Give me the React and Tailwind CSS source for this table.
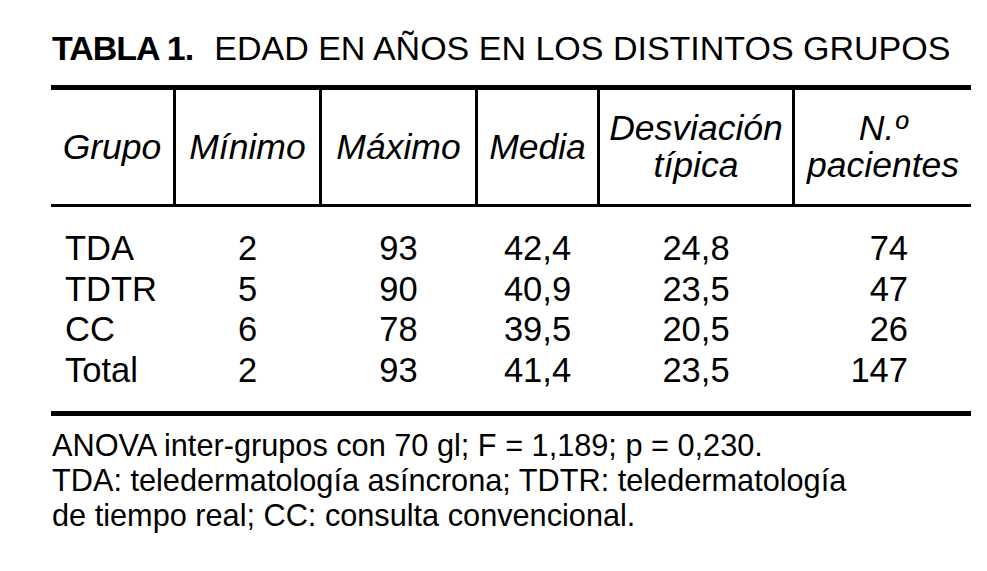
export default function App() {
  const rows = [
    { grupo: 'TDA', min: '2', max: '93', media: '42,4', desv: '24,8', n: '74' },
    { grupo: 'TDTR', min: '5', max: '90', media: '40,9', desv: '23,5', n: '47' },
    { grupo: 'CC', min: '6', max: '78', media: '39,5', desv: '20,5', n: '26' },
    { grupo: 'Total', min: '2', max: '93', media: '41,4', desv: '23,5', n: '147' },
  ]

  const cols = 'grid grid-cols-[125px_146px_156px_122px_195px_176px]'
  const head = 'flex h-[114px] items-center justify-center border-r-[3px] border-black text-center italic'

  return (
    <div className="h-[571px] w-[987px] bg-white pl-[51px] pt-[31px] font-['Liberation_Sans',Arial,sans-serif] text-black">
      {/* Titulo */}
      <h1 className="whitespace-nowrap pl-[1px] text-[34px] leading-none">
        <span className="font-bold tracking-[-1px]">TABLA 1.</span>
        <span className="ml-[21px]">EDAD EN AÑOS EN LOS DISTINTOS GRUPOS</span>
      </h1>

      {/* Tabla */}
      <div className="mt-[20px] w-[920px] border-t-[5px] border-b-[5px] border-black">
        <div className={`${cols} border-b-[3px] border-black text-[35.5px] leading-[37px]`}>
          <div className={head}>Grupo</div>
          <div className={head}>Mínimo</div>
          <div className={head}>Máximo</div>
          <div className={head}>Media</div>
          <div className={head}>
            Desviación
            <br />
            típica
          </div>
          <div className="flex h-[114px] items-center justify-center text-center italic">
            N.º
            <br />
            pacientes
          </div>
        </div>

        <div className="py-[21px] text-[34.5px] leading-[40.5px]">
          {rows.map((r) => (
            <div key={r.grupo} className={cols}>
              <div className="pl-[14px]">{r.grupo}</div>
              <div className="border-r-[3px] border-transparent text-center">{r.min}</div>
              <div className="border-r-[3px] border-transparent text-center">{r.max}</div>
              <div className="border-r-[3px] border-transparent text-center">{r.media}</div>
              <div className="border-r-[3px] border-transparent text-center">{r.desv}</div>
              <div className="pr-[63px] text-right">{r.n}</div>
            </div>
          ))}
        </div>
      </div>

      {/* Nota */}
      <div className="mt-[12px] pl-[1px] text-[30.7px] leading-[35px]">
        <p>ANOVA inter-grupos con 70 gl; F = 1,189; p = 0,230.</p>
        <p>TDA: teledermatología asíncrona; TDTR: teledermatología</p>
        <p>de tiempo real; CC: consulta convencional.</p>
      </div>
    </div>
  )
}
